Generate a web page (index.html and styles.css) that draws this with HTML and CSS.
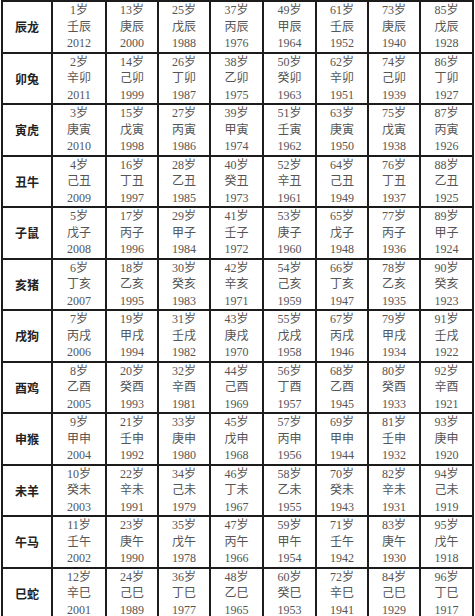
FILE: index.html
```html
<!DOCTYPE html>
<html lang="zh-CN">
<head>
<meta charset="utf-8">
<title>生肖年龄对照表</title>
<link rel="stylesheet" href="styles.css">
</head>
<body>
<table class="zodiac">
<colgroup>
<col class="c-label"><col class="c1"><col class="c2"><col class="c3"><col class="c4"><col class="c5"><col class="c6"><col class="c7"><col class="c8">
</colgroup>
<tbody>
<tr><th>辰龙</th><td>1岁<br>壬辰<br>2012</td><td>13岁<br>庚辰<br>2000</td><td>25岁<br>戊辰<br>1988</td><td>37岁<br>丙辰<br>1976</td><td>49岁<br>甲辰<br>1964</td><td>61岁<br>壬辰<br>1952</td><td>73岁<br>庚辰<br>1940</td><td>85岁<br>戊辰<br>1928</td></tr>
<tr><th>卯兔</th><td>2岁<br>辛卯<br>2011</td><td>14岁<br>己卯<br>1999</td><td>26岁<br>丁卯<br>1987</td><td>38岁<br>乙卯<br>1975</td><td>50岁<br>癸卯<br>1963</td><td>62岁<br>辛卯<br>1951</td><td>74岁<br>己卯<br>1939</td><td>86岁<br>丁卯<br>1927</td></tr>
<tr><th>寅虎</th><td>3岁<br>庚寅<br>2010</td><td>15岁<br>戊寅<br>1998</td><td>27岁<br>丙寅<br>1986</td><td>39岁<br>甲寅<br>1974</td><td>51岁<br>壬寅<br>1962</td><td>63岁<br>庚寅<br>1950</td><td>75岁<br>戊寅<br>1938</td><td>87岁<br>丙寅<br>1926</td></tr>
<tr><th>丑牛</th><td>4岁<br>己丑<br>2009</td><td>16岁<br>丁丑<br>1997</td><td>28岁<br>乙丑<br>1985</td><td>40岁<br>癸丑<br>1973</td><td>52岁<br>辛丑<br>1961</td><td>64岁<br>己丑<br>1949</td><td>76岁<br>丁丑<br>1937</td><td>88岁<br>乙丑<br>1925</td></tr>
<tr><th>子鼠</th><td>5岁<br>戊子<br>2008</td><td>17岁<br>丙子<br>1996</td><td>29岁<br>甲子<br>1984</td><td>41岁<br>壬子<br>1972</td><td>53岁<br>庚子<br>1960</td><td>65岁<br>戊子<br>1948</td><td>77岁<br>丙子<br>1936</td><td>89岁<br>甲子<br>1924</td></tr>
<tr><th>亥猪</th><td>6岁<br>丁亥<br>2007</td><td>18岁<br>乙亥<br>1995</td><td>30岁<br>癸亥<br>1983</td><td>42岁<br>辛亥<br>1971</td><td>54岁<br>己亥<br>1959</td><td>66岁<br>丁亥<br>1947</td><td>78岁<br>乙亥<br>1935</td><td>90岁<br>癸亥<br>1923</td></tr>
<tr><th>戌狗</th><td>7岁<br>丙戌<br>2006</td><td>19岁<br>甲戌<br>1994</td><td>31岁<br>壬戌<br>1982</td><td>43岁<br>庚戌<br>1970</td><td>55岁<br>戊戌<br>1958</td><td>67岁<br>丙戌<br>1946</td><td>79岁<br>甲戌<br>1934</td><td>91岁<br>壬戌<br>1922</td></tr>
<tr><th>酉鸡</th><td>8岁<br>乙酉<br>2005</td><td>20岁<br>癸酉<br>1993</td><td>32岁<br>辛酉<br>1981</td><td>44岁<br>己酉<br>1969</td><td>56岁<br>丁酉<br>1957</td><td>68岁<br>乙酉<br>1945</td><td>80岁<br>癸酉<br>1933</td><td>92岁<br>辛酉<br>1921</td></tr>
<tr><th>申猴</th><td>9岁<br>甲申<br>2004</td><td>21岁<br>壬申<br>1992</td><td>33岁<br>庚申<br>1980</td><td>45岁<br>戊申<br>1968</td><td>57岁<br>丙申<br>1956</td><td>69岁<br>甲申<br>1944</td><td>81岁<br>壬申<br>1932</td><td>93岁<br>庚申<br>1920</td></tr>
<tr><th>未羊</th><td>10岁<br>癸未<br>2003</td><td>22岁<br>辛未<br>1991</td><td>34岁<br>己未<br>1979</td><td>46岁<br>丁未<br>1967</td><td>58岁<br>乙未<br>1955</td><td>70岁<br>癸未<br>1943</td><td>82岁<br>辛未<br>1931</td><td>94岁<br>己未<br>1919</td></tr>
<tr><th>午马</th><td>11岁<br>壬午<br>2002</td><td>23岁<br>庚午<br>1990</td><td>35岁<br>戊午<br>1978</td><td>47岁<br>丙午<br>1966</td><td>59岁<br>甲午<br>1954</td><td>71岁<br>壬午<br>1942</td><td>83岁<br>庚午<br>1930</td><td>95岁<br>戊午<br>1918</td></tr>
<tr><th>巳蛇</th><td>12岁<br>辛巳<br>2001</td><td>24岁<br>己巳<br>1989</td><td>36岁<br>丁巳<br>1977</td><td>48岁<br>乙巳<br>1965</td><td>60岁<br>癸巳<br>1953</td><td>72岁<br>辛巳<br>1941</td><td>84岁<br>己巳<br>1929</td><td>96岁<br>丁巳<br>1917</td></tr>
</tbody>
</table>
</body>
</html>
```

FILE: styles.css
```css
html, body {
  margin: 0;
  padding: 0;
  background: #ffffff;
}

.zodiac {
  border-collapse: collapse;
  table-layout: fixed;
  width: 473px;
  margin: 0 0 0 1px;
}

.c-label { width: 50px; }
.c1 { width: 54px; }
.c2 { width: 52px; }
.c3 { width: 52px; }
.c4 { width: 53px; }
.c5 { width: 53px; }
.c6 { width: 52px; }
.c7 { width: 52px; }
.c8 { width: 53px; }

.zodiac tr {
  height: 51px;
}

.zodiac th,
.zodiac td {
  border: 2px solid #1c1c1c;
  padding: 0;
  text-align: center;
  vertical-align: middle;
}

.zodiac th {
  font-family: "Noto Sans CJK SC", sans-serif;
  font-weight: 700;
  font-size: 12px;
  color: #222222;
}

.zodiac td {
  font-family: "Liberation Serif", "Noto Sans CJK SC", serif;
  font-size: 12px;
  line-height: 16.5px;
  color: #555555;
}
```
